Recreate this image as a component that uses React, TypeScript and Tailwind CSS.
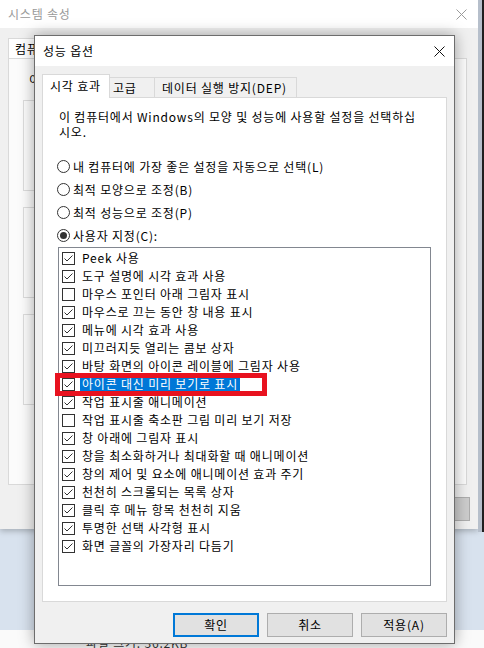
import React from "react";

type Item = { label: string; checked: boolean; selected?: boolean };

const items: Item[] = [
  { label: "Peek 사용", checked: true },
  { label: "도구 설명에 시각 효과 사용", checked: true },
  { label: "마우스 포인터 아래 그림자 표시", checked: false },
  { label: "마우스로 끄는 동안 창 내용 표시", checked: true },
  { label: "메뉴에 시각 효과 사용", checked: true },
  { label: "미끄러지듯 열리는 콤보 상자", checked: true },
  { label: "바탕 화면의 아이콘 레이블에 그림자 사용", checked: true },
  { label: "아이콘 대신 미리 보기로 표시", checked: true, selected: true },
  { label: "작업 표시줄 애니메이션", checked: true },
  { label: "작업 표시줄 축소판 그림 미리 보기 저장", checked: false },
  { label: "창 아래에 그림자 표시", checked: true },
  { label: "창을 최소화하거나 최대화할 때 애니메이션", checked: true },
  { label: "창의 제어 및 요소에 애니메이션 효과 주기", checked: true },
  { label: "천천히 스크롤되는 목록 상자", checked: true },
  { label: "클릭 후 메뉴 항목 천천히 지움", checked: true },
  { label: "투명한 선택 사각형 표시", checked: true },
  { label: "화면 글꼴의 가장자리 다듬기", checked: true },
];

const radios = [
  { label: "내 컴퓨터에 가장 좋은 설정을 자동으로 선택(L)", checked: false },
  { label: "최적 모양으로 조정(B)", checked: false },
  { label: "최적 성능으로 조정(P)", checked: false },
  { label: "사용자 지정(C):", checked: true },
];

const CloseIcon = ({ color }: { color: string }) => (
  <svg width="11" height="11" viewBox="0 0 11 11">
    <path d="M0.5 0.5 L10.5 10.5 M10.5 0.5 L0.5 10.5" stroke={color} strokeWidth="1" fill="none" />
  </svg>
);

const CheckBox = ({ checked }: { checked: boolean }) => (
  <span className="flex h-[13px] w-[13px] shrink-0 items-center justify-center border border-[#333333] bg-white">
    {checked && (
      <svg width="11" height="11" viewBox="0 0 11 11">
        <path d="M1.5 5.5 L4 8 L9.5 2.5" fill="none" stroke="#333333" strokeWidth="1" />
      </svg>
    )}
  </span>
);

const Radio = ({ checked }: { checked: boolean }) => (
  <span className="flex h-[13px] w-[13px] shrink-0 items-center justify-center rounded-full border border-[#333333] bg-white">
    {checked && <span className="h-[7px] w-[7px] rounded-full bg-[#333333]" />}
  </span>
);

// the window behind, mostly covered by the dialog
const BackgroundWindow = () => (
  <div className="absolute left-0 top-0 flex h-[529px] w-[478px] flex-col bg-[#f0f0f0] shadow-[0_2px_6px_rgba(0,0,0,0.25)]">
    <div className="flex h-[28px] shrink-0 items-center justify-between bg-white pl-[8px] pr-[11px]">
      <span className="text-[12px] text-[#999999]">시스템 속성</span>
      <CloseIcon color="#9a9a9a" />
    </div>
    <div className="flex flex-1 flex-col px-[8px] pt-[10px]">
      <div className="flex h-[20px]">
        <div className="w-[70px] border border-b-0 border-[#d9d9d9] bg-white pl-[6px] text-[12px] leading-[19px]">컴퓨</div>
      </div>
      <div className="flex h-[427px] w-[459px] flex-col border border-[#d9d9d9] bg-[#fbfbfb] px-[14px]">
        <div className="mt-[13px] pl-[6px] text-[12px] leading-[16px]">이</div>
        <div className="mt-[12px] h-[91px] border border-[#dcdcdc]" />
        <div className="mt-[16px] h-[91px] border border-[#dcdcdc]" />
        <div className="mt-[16px] h-[91px] border border-[#dcdcdc]" />
      </div>
      <div className="mt-[12px] flex justify-end">
        <div className="h-[24px] w-[80px] border border-[#adadad] bg-[#cccccc]" />
      </div>
    </div>
  </div>
);

const Dialog = () => (
  <div className="absolute left-[34px] top-[35px] flex h-[609px] w-[421px] flex-col border border-[#6d6d6d] bg-[#f0f0f0] shadow-[0_0_14px_rgba(0,0,0,0.35)]">
    <div className="flex h-[30px] shrink-0 items-center justify-between bg-white pl-[8px] pr-[9px]">
      <span className="text-[12px] text-black">성능 옵션</span>
      <CloseIcon color="#111111" />
    </div>
    <div className="flex flex-1 flex-col pb-[5px] pl-[7px] pr-[7px] pt-[8px]">
      <div className="flex h-[23px] items-end">
        <div className="relative z-10 -mb-[1px] h-[24px] w-[68px] border border-b-0 border-[#d9d9d9] bg-white pl-[7px] text-[12px] leading-[22px]">
          시각 효과
        </div>
        <div className="h-[20px] w-[45px] border border-b-0 border-l-0 border-[#d9d9d9] bg-[#f0f0f0] pl-[3px] text-[12px] leading-[19px]">
          고급
        </div>
        <div className="h-[20px] w-[142px] whitespace-nowrap border border-b-0 border-l-0 border-[#d9d9d9] bg-[#f0f0f0] pl-[7px] text-[12px] leading-[19px]">
          데이터 실행 방지(DEP)
        </div>
      </div>
      <div className="flex h-[505px] flex-col border border-[#d9d9d9] bg-white px-[14px] pt-[11px]">
        <p className="whitespace-nowrap pl-[2px] text-[12px] leading-[15px] text-black">
          이 컴퓨터에서 Windows의 모양 및 성능에 사용할 설정을 선택하십
          <br />
          시오.
        </p>
        <div className="mt-[16px] flex flex-col">
          {radios.map((r) => (
            <div key={r.label} className="flex h-[23px] items-center gap-[3px] whitespace-nowrap text-[12px]">
              <Radio checked={r.checked} />
              <span>{r.label}</span>
            </div>
          ))}
        </div>
        <div className="ml-[1px] flex h-[339px] w-[373px] flex-col border border-[#828790] bg-white pl-[3px] pt-[1px]">
          {items.map((it) => (
            <div key={it.label} className="relative flex h-[18px] shrink-0 items-center gap-[5px] whitespace-nowrap text-[12px]">
              <CheckBox checked={it.checked} />
              <span
                className={
                  it.selected
                    ? "bg-[#0078d7] px-[2px] leading-[16px] text-white"
                    : "px-[2px] leading-[16px] text-black"
                }
              >
                {it.label}
              </span>
              {it.selected && (
                <div className="absolute -left-[7px] -top-[2px] z-10 h-[23px] w-[212px] border-[5px] border-[#e8121f]" />
              )}
            </div>
          ))}
        </div>
      </div>
      <div className="mt-[11px] flex justify-end gap-[8px]">
        <button className="h-[24px] w-[86px] border-2 border-[#0078d7] bg-[#e1e1e1] text-[12px]">확인</button>
        <button className="h-[24px] w-[86px] border border-[#adadad] bg-[#e1e1e1] text-[12px]">취소</button>
        <button className="h-[24px] w-[86px] border border-[#adadad] bg-[#e1e1e1] text-[12px]">적용(A)</button>
      </div>
    </div>
  </div>
);

export default function App() {
  return (
    <div className="relative h-[648px] w-[484px] overflow-hidden bg-[#d8e2ee] font-['Noto_Sans_CJK_KR',sans-serif] tracking-[0.8px] text-black">
      <div className="absolute bottom-0 left-0 h-[18px] w-full bg-[#fafafa]">
        <span className="absolute left-[86px] top-[5px] text-[12px] leading-[16px] text-[#333333]">파일 크기: 36.2KB</span>
      </div>
      <BackgroundWindow />
      <div className="absolute left-[478px] top-0 h-[532px] w-[4px] bg-[#b6bfcb]" />
      <div className="absolute left-[482px] top-0 h-[532px] w-[2px] bg-[#1f1f1f]" />
      <Dialog />
    </div>
  );
}
